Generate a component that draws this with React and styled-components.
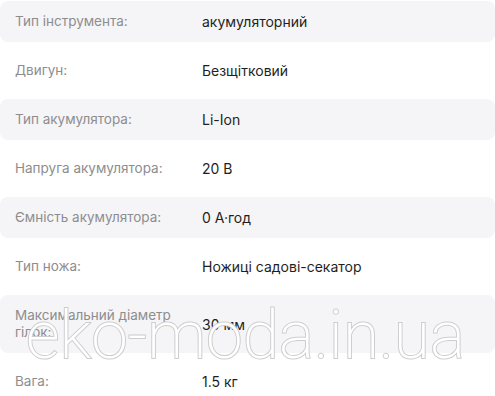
import React from 'react'
import styled, { createGlobalStyle } from 'styled-components'

const GlobalStyle = createGlobalStyle`
  html, body {
    margin: 0;
    padding: 0;
    background: #fff;
  }
  body {
    font-family: Inter, "Noto Sans", sans-serif;
    overflow: hidden;
  }
`

const specs = [
  ['Тип інструмента:', 'акумуляторний'],
  ['Двигун:', 'Безщітковий'],
  ['Тип акумулятора:', 'Li-Ion'],
  ['Напруга акумулятора:', '20 В'],
  ['Ємність акумулятора:', '0 А·год'],
  ['Тип ножа:', 'Ножиці садові-секатор'],
  ['Максимальний діаметр гілок:', '30 мм'],
  ['Вага:', '1.5 кг'],
]

function App() {
  return (
    <>
      <GlobalStyle />
      <Wrapper>
        <Table>
          {specs.map(([label, value], i) => (
            <Row key={label} $striped={i % 2 === 0}>
              <Label>{label}</Label>
              <Value>{value}</Value>
            </Row>
          ))}
        </Table>
        <Watermark>eko-moda.in.ua</Watermark>
      </Wrapper>
    </>
  )
}

const Wrapper = styled.div`
  position: relative;
  width: 495px;
  height: 396px;
  overflow: hidden;
`

const Table = styled.div`
  display: flex;
  flex-direction: column;
  gap: 8px;
  padding-top: 1px;
`

const Row = styled.div`
  display: grid;
  grid-template-columns: 187px 1fr;
  align-items: center;
  padding: 12px 15px;
  border-radius: 8px;
  background: ${p => (p.$striped ? '#f5f5f7' : '#fff')};
  font-size: 13.5px;
  line-height: 17px;
`

const Label = styled.div`
  color: #8d8d8f;
  padding-right: 20px;
`

const Value = styled.div`
  color: #1f1f22;
  font-size: 14px;
`

const Watermark = styled.div`
  position: absolute;
  left: 26px;
  top: 296px;
  font-family: Roboto, "Liberation Sans", sans-serif;
  font-weight: 200;
  font-size: 66px;
  line-height: 80px;
  color: #fff;
  -webkit-text-stroke: 2px #cdcdcd;
  paint-order: stroke fill;
  pointer-events: none;
  white-space: nowrap;
`

export default App
